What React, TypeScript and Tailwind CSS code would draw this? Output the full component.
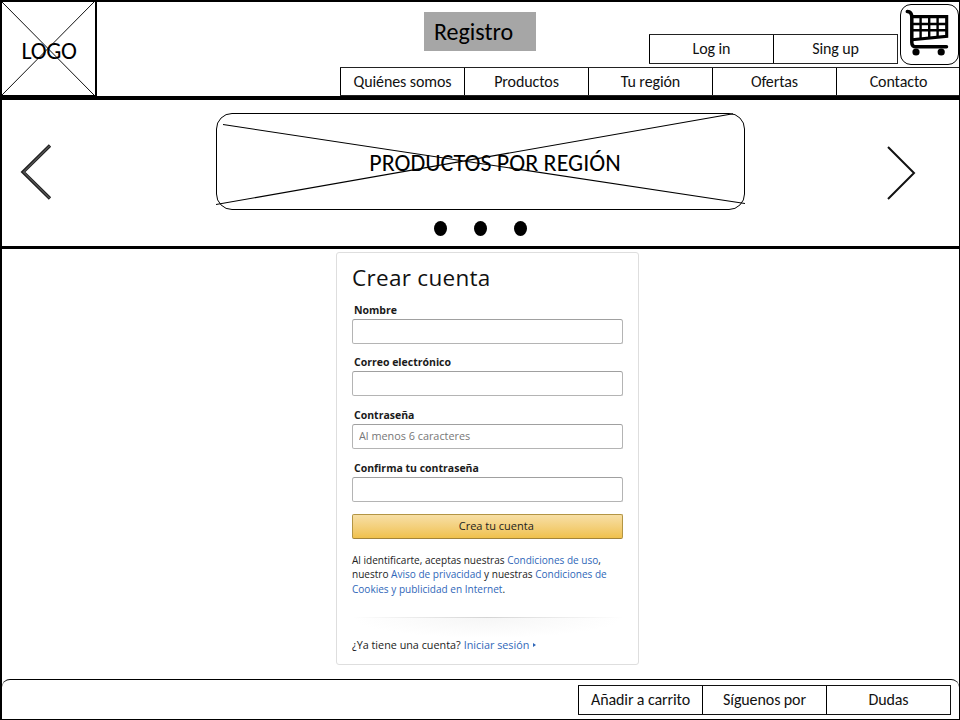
import React from 'react';

const navItems = ['Quiénes somos', 'Productos', 'Tu región', 'Ofertas', 'Contacto'];

function Cell({ label, className = '' }: { label: string; className?: string }) {
  return (
    <div className={`flex w-[124px] shrink-0 items-center justify-center border-l border-black text-[16px] leading-none tracking-[-0.1px] whitespace-nowrap ${className}`}>
      <span className="text-[#111]">{label}</span>
    </div>
  );
}

function Cart() {
  return (
    <svg viewBox="0 0 59 62" className="h-[62px] w-[59px]" fill="none" stroke="#000">
      <path d="M7.3 7.5Q11.8 7.8 11.8 13V38.5Q11.8 42.8 16 42.8H46.5" strokeWidth="3.5" strokeLinecap="round" />
      <path d="M12 12.6H46.7V32.3L12 35.7" strokeWidth="3.1" />
      <path d="M12 20.1H46M12 26.2H46" strokeWidth="2.5" />
      <path d="M20.6 12V34M29.2 12V33M37.6 12V32" strokeWidth="2.4" />
      <circle cx="16" cy="48" r="3.6" fill="#000" stroke="none" />
      <circle cx="41.2" cy="48" r="3.6" fill="#000" stroke="none" />
    </svg>
  );
}

function Header() {
  return (
    <header className="flex h-[98px] shrink-0 border-b-4 border-black">
      <div className="relative flex h-[94px] w-[95px] shrink-0 items-center justify-center border-r-2 border-b border-black">
        <svg className="absolute top-0 left-0 h-[94px] w-[93px]" viewBox="0 0 93 94" stroke="#111" strokeWidth="1">
          <path d="M0 0L92 93M92 0L0 93" />
        </svg>
        <span className="relative mt-[5px] ml-[1px] text-[24px] leading-none tracking-[-0.4px]">LOGO</span>
      </div>
      <div className="flex flex-1 flex-col">
        <div className="flex h-[65px] items-start">
          <div className="mt-[10px] ml-[327px] h-[39px] w-[112px] bg-[#a6a6a6] pt-[8px] pl-[10px] text-[24px] leading-[24px]">Registro</div>
          <div className="mt-[32px] ml-[113px] flex h-[30px] w-[249px] border-y border-r border-[#222]">
            <Cell label="Log in" />
            <Cell label="Sing up" />
          </div>
          <div className="mt-[2px] ml-[2px] h-[61px] w-[59px] shrink-0 rounded-[11px] border border-black">
            <div className="-m-px">
              <Cart />
            </div>
          </div>
        </div>
        <nav className="ml-[243px] flex h-[29px] w-[620px] border-y border-[#222]">
          {navItems.map((item) => (
            <Cell key={item} label={item} />
          ))}
        </nav>
      </div>
    </header>
  );
}

function Carousel() {
  return (
    <section className="flex h-[149px] shrink-0 items-start border-b-[3px] border-black">
      <svg className="mt-[40px] ml-[17px] h-[64px] w-[34px]" viewBox="0 0 34 64" fill="none">
        <path d="M31 5.5L4 32L31 58.5" stroke="#222" strokeWidth="3.4" />
        <path d="M30.5 6L4.5 32L30.5 58" stroke="#888" strokeWidth="0.8" />
      </svg>
      <div className="ml-[163px] flex w-[529px] flex-col items-center">
        <div className="relative mt-[13px] flex h-[97px] w-[529px] items-center justify-center rounded-[16px] border border-black">
          <svg className="absolute -top-px -left-px h-[97px] w-[529px]" viewBox="0 0 529 97" stroke="#000" strokeWidth="1.1">
            <path d="M7 11.5L529 90.5M0 91.5L517 .8" />
          </svg>
          <span className="relative mt-[3px] ml-[29px] text-[24px] leading-none whitespace-nowrap">PRODUCTOS POR REGIÓN</span>
        </div>
        <div className="mt-[11px] flex gap-[27px]">
          <i className="h-[15px] w-[13px] rounded-[50%] bg-black" />
          <i className="h-[15px] w-[13px] rounded-[50%] bg-black" />
          <i className="h-[15px] w-[13px] rounded-[50%] bg-black" />
        </div>
      </div>
      <svg className="mt-[40px] ml-[138px] h-[64px] w-[36px]" viewBox="0 0 36 64" fill="none">
        <path d="M5 7L31 33L5 59" stroke="#111" strokeWidth="2" />
      </svg>
    </section>
  );
}

function Field({ label, placeholder }: { label: string; placeholder?: string }) {
  return (
    <label className="mb-[11.85px] block">
      <span className="ml-[2px] block h-[16px] text-[10.5px] leading-[14px] font-bold whitespace-nowrap text-[#1a1a1a]">{label}</span>
      <input
        placeholder={placeholder}
        className="block h-[25px] w-[270.5px] rounded-[2.5px] border border-[#b4b4b4] border-t-[#a0a0a0] bg-white px-[6px] pb-[2px] text-[10.85px] outline-none placeholder:text-[#777]"
      />
    </label>
  );
}

function SignUpForm() {
  return (
    <form className="mt-[3px] ml-[334px] h-[413px] w-[303px] rounded-[3px] border border-[#dedede] pt-[9.6px] pl-[15px] font-['Open_Sans','Noto_Sans',sans-serif] text-[#222]">
      <h1 className="h-[40px] text-[22.5px] leading-[30px] tracking-[0.3px] whitespace-nowrap text-[#111]">Crear cuenta</h1>
      <Field label="Nombre" />
      <Field label="Correo electrónico" />
      <Field label="Contraseña" placeholder="Al menos 6 caracteres" />
      <Field label="Confirma tu contraseña" />
      <button type="button" className="flex h-[25px] w-[270.5px] items-center justify-center rounded-[2px] border border-[#b39544] border-b-[#a2833a] bg-linear-to-b from-[#f7dfa5] to-[#f0c14b] pl-[18px] text-[11px]">
        Crea tu cuenta
      </button>
      <p className="mt-[14px] text-[10.05px] leading-[14.4px] whitespace-nowrap [&_a]:text-[#2f67b9]">
        Al identificarte, aceptas nuestras <a>Condiciones de uso</a>,<br />
        nuestro <a>Aviso de privacidad</a> y nuestras <a>Condiciones de</a>
        <br />
        <a>Cookies y publicidad en Internet</a>.
      </p>
      <div className="mt-[21px] h-px w-[271px] bg-linear-to-r from-transparent via-[#d4d4d4] to-transparent" />
      <div className="h-[20px] w-[271px] bg-[radial-gradient(ellipse_at_top,#f6f6f6,#fff_70%)]" />
      <p className="flex items-center text-[10.8px] leading-[14px] whitespace-nowrap">
        ¿Ya tiene una cuenta?
        <a className="ml-[3px] text-[#2f67b9]">Iniciar sesión</a>
        <i className="ml-[4px] border-y-[2.5px] border-l-[3px] border-y-transparent border-l-[#2f67b9]" />
      </p>
    </form>
  );
}

export default function App() {
  return (
    <div className="flex h-[720px] w-[960px] flex-col overflow-hidden border-t-2 border-r border-b border-l-2 border-black bg-white font-[Carlito,Lato,sans-serif] text-black">
      <Header />
      <Carousel />
      <main className="h-[430px] shrink-0">
        <SignUpForm />
      </main>
      <footer className="flex flex-1 items-start rounded-t-[8px] border-t border-black">
        <div className="mt-[5px] ml-[576px] flex h-[30px] w-[373px] border-y border-r border-[#111]">
          <Cell label="Añadir a carrito" />
          <Cell label="Síguenos por" />
          <Cell label="Dudas" />
        </div>
      </footer>
    </div>
  );
}
